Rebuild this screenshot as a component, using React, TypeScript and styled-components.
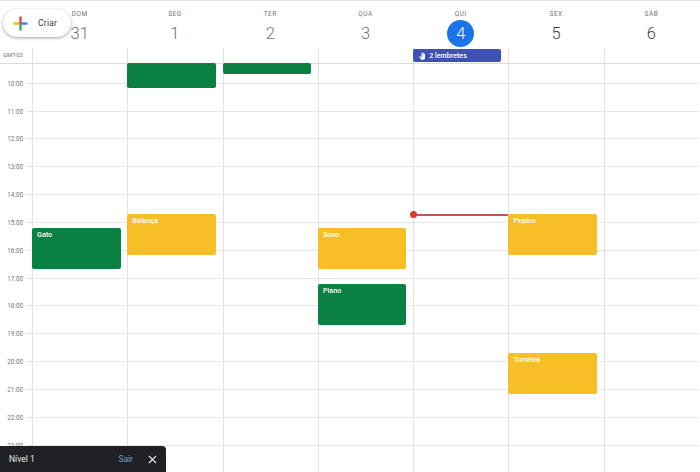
import React from 'react';
import styled, { createGlobalStyle } from 'styled-components';
import { X } from 'lucide-react';

const HOUR = 27.84;
const FIRST_SLOT = 19.8;

type EventItem = {
  day: number;
  title?: string;
  top: number;
  height: number;
  tone: 'green' | 'yellow';
};

const days = [
  { label: 'DOM', date: '31', past: true },
  { label: 'SEG', date: '1', past: true },
  { label: 'TER', date: '2', past: true },
  { label: 'QUA', date: '3', past: true },
  { label: 'QUI', date: '4', today: true },
  { label: 'SEX', date: '5' },
  { label: 'SÁB', date: '6' },
];

const hours = Array.from({ length: 14 }, (_, i) => `${10 + i}:00`);

const events: EventItem[] = [
  { day: 1, top: -1, height: 25, tone: 'green' },
  { day: 2, top: -1, height: 11, tone: 'green' },
  { day: 0, title: 'Gato', top: 164, height: 40.5, tone: 'green' },
  { day: 1, title: 'Balança', top: 150, height: 41, tone: 'yellow' },
  { day: 3, title: 'Sono', top: 164, height: 40.5, tone: 'yellow' },
  { day: 3, title: 'Piano', top: 220, height: 40.5, tone: 'green' },
  { day: 5, title: 'Pepino', top: 150, height: 41, tone: 'yellow' },
  { day: 5, title: 'Torneira', top: 289, height: 41, tone: 'yellow' },
];

const GlobalStyle = createGlobalStyle`
  html, body {
    margin: 0;
    padding: 0;
    background: #fff;
    font-family: Roboto, "Liberation Sans", sans-serif;
  }
`;

const Page = styled.div`
  position: relative;
  width: 700px;
  height: 472px;
  overflow: hidden;
  background: #fff;
  border-top: 1px solid #e4e4e4;
  box-sizing: border-box;
`;

const Columns = styled.div`
  display: grid;
  grid-template-columns: 32px repeat(7, 95.3px);
`;

const Header = styled(Columns)`
  height: 47px;
`;

const DayHead = styled.div`
  display: flex;
  flex-direction: column;
  align-items: center;
  padding-top: 9px;
`;

const DayLabel = styled.span`
  font-size: 6.5px;
  line-height: 9px;
  font-weight: 400;
  letter-spacing: 0.5px;
  color: #70757a;
`;

const DayDate = styled.span<{ $today?: boolean; $past?: boolean }>`
  width: 27px;
  height: 27px;
  margin-top: 0.5px;
  display: flex;
  align-items: center;
  justify-content: center;
  border-radius: 50%;
  font-size: 16.5px;
  font-weight: 300;
  color: ${(p) => (p.$today ? '#fff' : p.$past ? '#70757a' : '#3c4043')};
  background: ${(p) => (p.$today ? '#1a73e8' : 'transparent')};
`;

const AllDayRow = styled(Columns)`
  height: 15px;
  border-bottom: 1px solid #dadce0;
`;

const GmtLabel = styled.div`
  font-size: 5.8px;
  line-height: 15px;
  color: #70757a;
  padding-left: 3px;
  white-space: nowrap;
`;

const AllDayCell = styled.div`
  border-left: 1px solid #e2e2e2;
  position: relative;
  padding: 1px 7px 1px 0;
`;

const Reminder = styled.div`
  height: 13px;
  margin-left: -1px;
  display: flex;
  align-items: center;
  gap: 3px;
  padding-left: 6px;
  background: #3f51b5;
  border-radius: 2px;
  color: #fff;
  font-size: 7.1px;
  font-weight: 500;
`;

const TimeGrid = styled(Columns)`
  height: 420px;
`;

const Gutter = styled.div`
  display: flex;
  flex-direction: column;
`;

const GutterSlot = styled.div<{ $first?: boolean }>`
  height: ${(p) => (p.$first ? FIRST_SLOT : HOUR)}px;
  flex: none;
  box-sizing: border-box;
  position: relative;
`;

const HourLabel = styled.span`
  position: absolute;
  right: 9px;
  bottom: -4px;
  font-size: 6.3px;
  line-height: 8px;
  color: #70757a;
`;

const Tick = styled.span`
  position: absolute;
  right: 0;
  bottom: 0;
  width: 5px;
  height: 1px;
  background: #e2e2e2;
`;

const DayColumn = styled.div`
  position: relative;
  border-left: 1px solid #e2e2e2;
  display: flex;
  flex-direction: column;
`;

const HourSlot = styled.div<{ $first?: boolean }>`
  height: ${(p) => (p.$first ? FIRST_SLOT : HOUR)}px;
  flex: none;
  box-sizing: border-box;
  border-bottom: 1px solid #e6e6e6;
`;

const EventCard = styled.div<{ $tone: 'green' | 'yellow' }>`
  position: absolute;
  left: -1px;
  width: 88.5px;
  box-sizing: border-box;
  padding: 2px 5px;
  border-radius: 2px;
  background: ${(p) => (p.$tone === 'green' ? '#0b8043' : '#f6bf26')};
  color: #fff;
  font-size: 7.2px;
  line-height: 9px;
  font-weight: 500;
`;

const NowLine = styled.div`
  position: absolute;
  left: 0;
  right: 0;
  top: 149.5px;
  height: 2px;
  background: #b85a52;
`;

const NowDot = styled.span`
  position: absolute;
  left: -4px;
  top: -3px;
  width: 7px;
  height: 7px;
  border-radius: 50%;
  background: #d93a30;
`;

const CreateButton = styled.div`
  position: absolute;
  left: 3px;
  top: 8px;
  width: 68px;
  height: 28px;
  display: flex;
  align-items: center;
  gap: 7px;
  padding-left: 7px;
  box-sizing: border-box;
  background: #fff;
  border-radius: 14px;
  box-shadow: 0 1px 2px rgba(60, 64, 67, 0.3), 0 1px 3px 1px rgba(60, 64, 67, 0.15);
  font-size: 8.6px;
  font-weight: 400;
  letter-spacing: 0.2px;
  color: #3c4043;
`;

const Snackbar = styled.div`
  position: absolute;
  left: 0;
  bottom: 0;
  width: 166px;
  height: 26px;
  display: flex;
  align-items: center;
  padding: 0 7px 0 9px;
  box-sizing: border-box;
  background: #202124;
  border-top-right-radius: 4px;
  color: #e8eaed;
  font-size: 8.5px;
  font-weight: 400;
`;

const SnackTitle = styled.span`
  flex: 1;
`;

const SnackAction = styled.span`
  color: #7b9fd8;
  margin-right: 13px;
`;

const PlusIcon = () => (
  <svg width="21" height="21" viewBox="0 0 36 36">
    <path fill="#34A853" d="M16 16v14h4V20z" />
    <path fill="#4285F4" d="M30 16H20l-4 4h14z" />
    <path fill="#FBBC05" d="M6 16v4h10l4-4z" />
    <path fill="#EA4335" d="M20 16V6h-4v14z" />
  </svg>
);

const ReminderIcon = () => (
  <svg width="7" height="8" viewBox="0 0 14 16" fill="#fff">
    <path d="M5 1.5a1 1 0 0 1 2 0V7h.6V2.6a1 1 0 0 1 2 0V7h.5V4a1 1 0 0 1 2 0v7.5c0 2.3-1.7 4-4 4H6.5c-1.4 0-2.4-.6-3.2-1.7L.4 9.6c-.4-.6.4-1.5 1.2-1L5 10.5z" />
  </svg>
);

export default function App() {
  return (
    <>
      <GlobalStyle />
      <Page>
        <Header>
          <div />
          {days.map((d) => (
            <DayHead key={d.label}>
              <DayLabel>{d.label}</DayLabel>
              <DayDate $today={d.today} $past={d.past}>
                {d.date}
              </DayDate>
            </DayHead>
          ))}
        </Header>

        <AllDayRow>
          <GmtLabel>GMT-03</GmtLabel>
          {days.map((d) => (
            <AllDayCell key={d.label}>
              {d.today && (
                <Reminder>
                  <ReminderIcon />
                  2 lembretes
                </Reminder>
              )}
            </AllDayCell>
          ))}
        </AllDayRow>

        <TimeGrid>
          <Gutter>
            <GutterSlot $first>
              <HourLabel>{hours[0]}</HourLabel>
              <Tick />
            </GutterSlot>
            {hours.slice(1).map((h) => (
              <GutterSlot key={h}>
                <HourLabel>{h}</HourLabel>
                <Tick />
              </GutterSlot>
            ))}
          </Gutter>
          {days.map((d, i) => (
            <DayColumn key={d.label}>
              <HourSlot $first />
              {hours.slice(1).map((h) => (
                <HourSlot key={h} />
              ))}
              {events
                .filter((e) => e.day === i)
                .map((e) => (
                  <EventCard
                    key={`${e.day}-${e.top}`}
                    $tone={e.tone}
                    style={{ top: e.top, height: e.height }}
                  >
                    {e.title}
                  </EventCard>
                ))}
              {d.today && (
                <NowLine>
                  <NowDot />
                </NowLine>
              )}
            </DayColumn>
          ))}
        </TimeGrid>

        <CreateButton>
          <PlusIcon />
          Criar
        </CreateButton>

        <Snackbar>
          <SnackTitle>Nível 1</SnackTitle>
          <SnackAction>Sair</SnackAction>
          <X size={13} color="#e8eaed" strokeWidth={2} />
        </Snackbar>
      </Page>
    </>
  );
}
